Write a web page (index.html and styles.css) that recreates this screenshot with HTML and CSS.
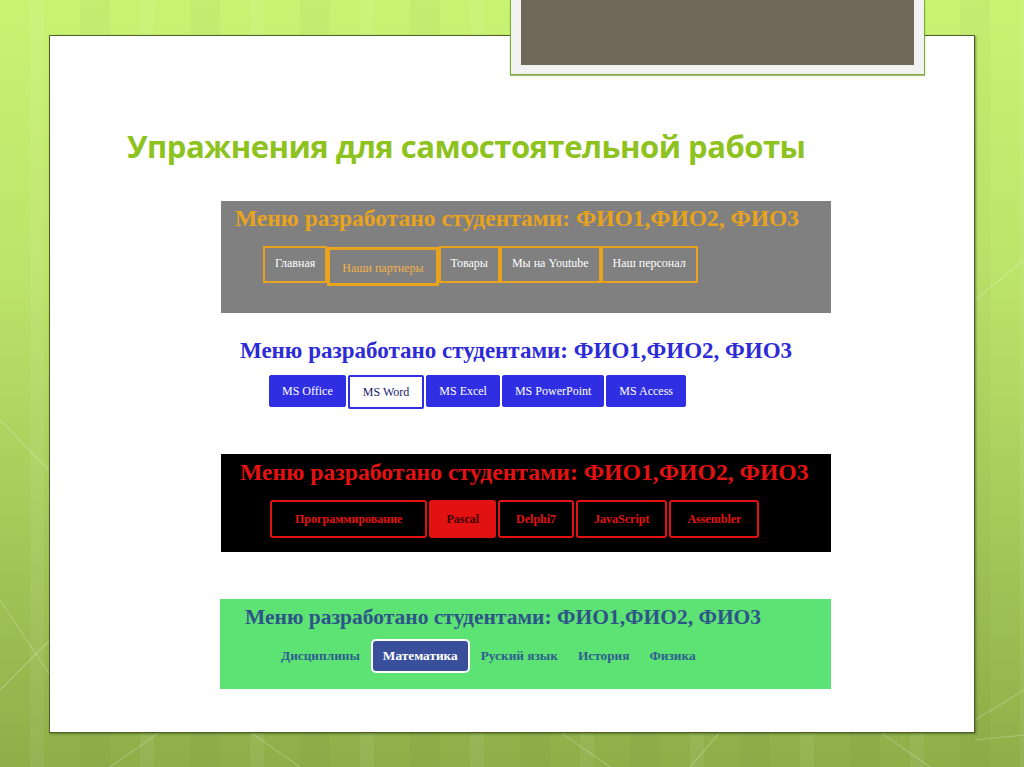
FILE: index.html
```html
<!DOCTYPE html>
<html lang="ru">
<head>
<meta charset="utf-8">
<title>Упражнения для самостоятельной работы</title>
<link rel="stylesheet" href="styles.css">
</head>
<body>
<div class="slide">
  <svg class="deco" width="1024" height="767" viewBox="0 0 1024 767" aria-hidden="true">
    <g stroke="#ffffff" stroke-opacity="0.22" stroke-width="1.2" fill="none">
      <line x1="0" y1="600" x2="60" y2="690"/>
      <line x1="0" y1="690" x2="50" y2="640"/>
      <line x1="0" y1="420" x2="49" y2="470"/>
      <line x1="110" y1="767" x2="160" y2="732"/>
      <line x1="250" y1="732" x2="300" y2="767"/>
      <line x1="560" y1="732" x2="610" y2="767"/>
      <line x1="690" y1="767" x2="720" y2="732"/>
      <line x1="880" y1="732" x2="930" y2="767"/>
      <line x1="975" y1="720" x2="1024" y2="690"/>
      <line x1="975" y1="740" x2="1024" y2="735"/>
      <line x1="975" y1="300" x2="1024" y2="260"/>
    </g>
  </svg>
  <div class="card">
    <h1 class="title">Упражнения для самостоятельной работы</h1>

    <section class="panel p1">
      <h2 class="ph">Меню разработано студентами: ФИО1,ФИО2, ФИО3</h2>
      <nav class="menu m1">
        <a class="mi">Главная</a>
        <a class="mi active">Наши партнеры</a>
        <a class="mi">Товары</a>
        <a class="mi">Мы на Youtube</a>
        <a class="mi">Наш персонал</a>
      </nav>
    </section>

    <section class="panel p2">
      <h2 class="ph">Меню разработано студентами: ФИО1,ФИО2, ФИО3</h2>
      <nav class="menu m2">
        <a class="mi">MS Office</a>
        <a class="mi active">MS Word</a>
        <a class="mi">MS Excel</a>
        <a class="mi">MS PowerPoint</a>
        <a class="mi">MS Access</a>
      </nav>
    </section>

    <section class="panel p3">
      <h2 class="ph">Меню разработано студентами: ФИО1,ФИО2, ФИО3</h2>
      <nav class="menu m3">
        <a class="mi">Программирование</a>
        <a class="mi active">Pascal</a>
        <a class="mi">Delphi7</a>
        <a class="mi">JavaScript</a>
        <a class="mi">Assembler</a>
      </nav>
    </section>

    <section class="panel p4">
      <h2 class="ph">Меню разработано студентами: ФИО1,ФИО2, ФИО3</h2>
      <nav class="menu m4">
        <a class="mi">Дисциплины</a>
        <a class="mi active">Математика</a>
        <a class="mi">Руский язык</a>
        <a class="mi">История</a>
        <a class="mi">Физика</a>
      </nav>
    </section>
  </div>
  <div class="photo"><div class="photo-inner"></div></div>
</div>
</body>
</html>
```

FILE: styles.css
```css
* { box-sizing: border-box; }
html, body { margin: 0; padding: 0; }
body { width: 1024px; height: 767px; overflow: hidden; }

.slide {
  position: relative;
  width: 1024px;
  height: 767px;
  padding: 35px 0 0 49px;
  background:
    repeating-linear-gradient(90deg, rgba(255,255,255,0) 0 30px, rgba(255,255,255,0.06) 30px 44px, rgba(255,255,255,0) 44px 80px, rgba(0,0,0,0.025) 80px 110px),
    linear-gradient(180deg, #c9f373 0%, #bde46a 35%, #a9cc5c 65%, #8fae48 100%);
}
.deco { position: absolute; left: 0; top: 0; }

.card {
  position: relative;
  width: 926px;
  height: 698px;
  background: #ffffff;
  border: 1px solid #4f5f2c;
  box-shadow: 1px 1px 2px rgba(40,60,10,0.5);
  padding: 0 0 0 171px;
}

.photo {
  position: absolute;
  left: 510px;
  top: 0;
  width: 415px;
  height: 75px;
  background: #f2f2f2;
  border: 1px solid #7eab2e;
  border-top: 0;
  box-shadow: 0 1px 1px rgba(80,120,20,0.5);
  padding: 0 10px 9px 10px;
}
.photo-inner {
  width: 100%;
  height: 100%;
  background: #70685a;
}

.title {
  margin: 90px 0 0 -94px;
  height: 75px;
  font-family: "Open Sans", "DejaVu Sans", sans-serif;
  font-weight: 700;
  font-size: 31px;
  line-height: 40px;
  color: #8ec21e;
  letter-spacing: -0.5px;
}

.panel { width: 610px; }
.ph {
  margin: 0;
  font-family: "Liberation Serif", "Times New Roman", serif;
  font-weight: 700;
  font-size: 22px;
  line-height: 26px;
  white-space: nowrap;
}
.menu { display: flex; align-items: flex-start; }
.mi {
  font-family: "Liberation Serif", "Times New Roman", serif;
  font-size: 12px;
  white-space: nowrap;
  display: block;
}

/* Panel 1 : grey / orange */
.p1 {
  height: 112px;
  background: #808080;
  padding: 4px 0 0 14px;
}
.p1 .ph { color: #eaa31c; font-size: 23.5px; }
.m1 { margin: 15px 0 0 28px; }
.m1 .mi {
  color: #ffffff;
  border: 2px solid #eaa31c;
  height: 37px;
  line-height: 30px;
  padding: 0 10px;
}
.m1 .mi.active {
  color: #f3b04a;
  border-width: 3px;
  height: 39px;
  margin-top: 1px;
  line-height: 36px;
  padding: 0 12px;
}

/* Panel 2 : white / blue */
.p2 {
  height: 141px;
  padding: 25px 0 0 19px;
}
.p2 .ph { color: #2d2bd8; font-size: 23px; }
.m2 { margin: 11px 0 0 29px; gap: 2px; }
.m2 .mi {
  background: #2f2ee3;
  color: #ffffff;
  border: 1px solid #2f2ee3;
  border-radius: 2px;
  height: 32px;
  line-height: 30px;
  padding: 0 12px;
}
.m2 .mi.active {
  background: #ffffff;
  color: #1b1a6e;
  border: 2px solid #2f2ee3;
  height: 34px;
  line-height: 30px;
  padding: 0 13px;
}

/* Panel 3 : black / red */
.p3 {
  height: 98px;
  background: #000000;
  padding: 5px 0 0 19px;
}
.p3 .ph { color: #e31212; font-size: 23.7px; }
.m3 { margin: 15px 0 0 30px; gap: 2px; }
.m3 .mi {
  color: #e31212;
  font-weight: 700;
  border: 2px solid #e31212;
  border-radius: 3px;
  height: 38px;
  line-height: 34px;
  padding: 0 16px;
}
.m3 .mi:first-child { padding: 0 23px; }
.m3 .mi.active {
  background: #e31212;
  color: #3a0000;
  padding: 0 15px;
}

/* Panel 4 : green / navy */
.p4 {
  height: 90px;
  margin: 47px 0 0 -1px;
  width: 611px;
  background: #5de274;
  padding: 5px 0 0 25px;
}
.p4 .ph { color: #2e5588; font-size: 21.5px; }
.m4 { margin: 9px 0 0 26px; align-items: center; }
.m4 .mi {
  color: #2e5f8e;
  font-weight: 700;
  font-size: 13.3px;
  padding: 0 10px;
}
.m4 .mi.active {
  background: #3a4f9b;
  color: #ffffff;
  border: 2px solid #ffffff;
  border-radius: 5px;
  height: 34px;
  line-height: 30px;
  padding: 0 10px;
  margin: 0 1px;
}
```
